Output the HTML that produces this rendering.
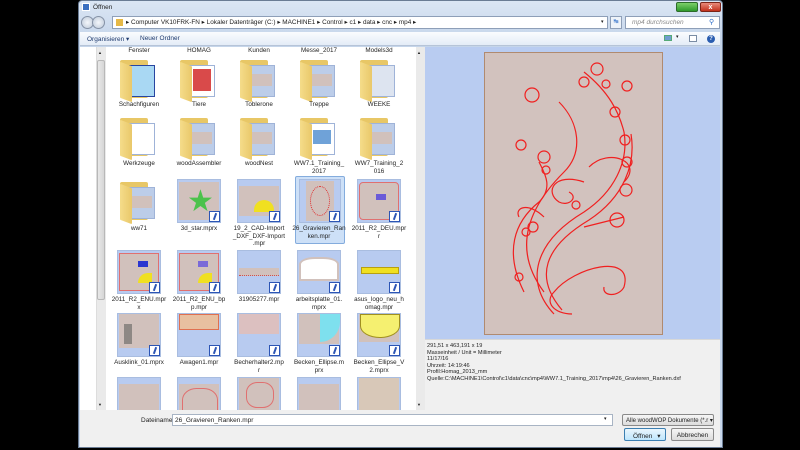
<!DOCTYPE html>
<html><head><meta charset="utf-8"><style>
*{margin:0;padding:0;box-sizing:border-box}
body{width:800px;height:450px;background:#000;position:relative;overflow:hidden;font-family:"Liberation Sans",sans-serif;font-size:6.5px;color:#1e1e1e}
.a{position:absolute}
.win{left:78px;top:0;width:645px;height:448px;background:linear-gradient(#dbe6f4,#c5d5ea 40px,#c9d8ec);border:1px solid #6a7c94;border-radius:4px 4px 0 0}
.lbl{position:absolute;width:60px;text-align:center;line-height:7.5px;font-size:6.3px}
.th{position:absolute;width:44px;height:44px;background:#b8cbf0;border:1px solid #a9bde0}
.th .w{position:absolute;left:1px;right:1px;top:6px;bottom:6px;background:#d1c1bc}
.bad{position:absolute;right:0;bottom:0;width:11px;height:11px;background:#fff;border:1px solid #2c55b5}
.bad:after{content:"";position:absolute;left:4px;top:1px;width:2px;height:7px;background:#2c55b5;transform:rotate(20deg)}
.fd{position:absolute;width:44px;height:44px}
.fd .b{position:absolute;left:3px;top:4px;width:28px;height:38px;background:#e8c766;border-radius:2px}
.fd .p{position:absolute;left:12px;top:9px;width:26px;height:32px;background:#bccde9;border:1px solid #9fb3d8}
.fd .f{position:absolute;left:3px;top:8px;width:12px;height:36px;background:linear-gradient(90deg,#f5dc8a,#e9c86a);transform:skewY(20deg);border-radius:1px}
</style></head><body>
<div class="a win"></div>
<div class="a" style="left:82px;top:3px;width:8px;height:8px;background:#3a6fc0;border:1px solid #fff"></div>
<div class="a" style="left:93px;top:4px;font-size:6.5px">Öffnen</div>
<div class="a" style="left:676px;top:2px;width:22px;height:10px;background:linear-gradient(#7ccf6a,#2f9a2c);border:1px solid #2d6b2a;border-radius:2px"></div>
<div class="a" style="left:700px;top:2px;width:21px;height:10px;background:linear-gradient(#e88a7a,#c2301c);border:1px solid #7a2418;border-radius:2px;color:#fff;font-size:7px;text-align:center;line-height:9px;font-weight:bold">x</div>
<div class="a" style="left:81px;top:16px;width:13px;height:13px;border-radius:50%;background:radial-gradient(#f4f7fb,#bcc8d8);border:1px solid #8592a6"></div>
<div class="a" style="left:92px;top:16px;width:13px;height:13px;border-radius:50%;background:radial-gradient(#f4f7fb,#bcc8d8);border:1px solid #8592a6"></div>
<div class="a" style="left:112px;top:16px;width:496px;height:13px;background:#fff;border:1px solid #8e9fb8"></div>
<div class="a" style="left:116px;top:19px;width:7px;height:7px;background:#e6b947"></div>
<div class="a" style="left:126px;top:18px;font-size:6.4px;white-space:nowrap">▸ Computer VK10FRK-FN ▸ Lokaler Datenträger (C:) ▸ MACHINE1 ▸ Control ▸ c1 ▸ data ▸ cnc ▸ mp4 ▸</div>
<div class="a" style="left:601px;top:19px;font-size:5px">▾</div>
<div class="a" style="left:610px;top:16px;width:12px;height:13px;background:#eef3f9;border:1px solid #8e9fb8;color:#2b6cc8;font-size:6px;text-align:center;line-height:11px">↹</div>
<div class="a" style="left:625px;top:16px;width:95px;height:13px;background:#fff;border:1px solid #8e9fb8;color:#8a8a8a;font-style:italic;padding:2px 0 0 6px">mp4 durchsuchen</div>
<div class="a" style="left:709px;top:18px;color:#2b6cc8;font-size:7px">⚲</div>
<div class="a" style="left:80px;top:32px;width:640px;height:14px;background:linear-gradient(#fafcfe,#e4ecf7);border-bottom:1px solid #b6c4d8"></div>
<div class="a" style="left:87px;top:35px;color:#1e3a6e">Organisieren ▾</div>
<div class="a" style="left:140px;top:35px;color:#1e3a6e">Neuer Ordner</div>
<div class="a" style="left:664px;top:35px;width:8px;height:6px;background:#6f9dcf;border:1px solid #5a7"></div>
<div class="a" style="left:676px;top:34px;font-size:5px">▾</div>
<div class="a" style="left:689px;top:35px;width:8px;height:7px;background:#fff;border:1px solid #7a8ca4"></div>
<div class="a" style="left:707px;top:35px;width:8px;height:8px;border-radius:50%;background:#2a5db0;color:#fff;font-size:6px;text-align:center;line-height:8px;font-weight:bold">?</div>
<div class="a" style="left:80px;top:47px;width:16px;height:363px;background:#fff"></div>
<div class="a" style="left:96px;top:47px;width:10px;height:363px;background:#eaeaea;border-left:1px solid #ddd"></div>
<div class="a" style="left:97px;top:60px;width:8px;height:240px;background:linear-gradient(90deg,#e8e8e8,#d6d6d6);border:1px solid #b8b8b8;border-radius:2px"></div>
<div class="a" style="left:98px;top:50px;font-size:4px">▲</div>
<div class="a" style="left:98px;top:402px;font-size:4px">▼</div>
<div class="a" style="left:106px;top:47px;width:311px;height:363px;background:#fff"></div>
<div class="a" style="left:416px;top:47px;width:9px;height:363px;background:#eaeaea"></div>
<div class="a" style="left:417px;top:50px;font-size:4px">▲</div>
<div class="a" style="left:417px;top:402px;font-size:4px">▼</div>
<div class="a" style="left:295px;top:176px;width:50px;height:68px;background:#cde0f7;border:1px solid #84acdd;border-radius:2px"></div>

<div class="lbl" style="left:109px;top:47px">Fenster</div>
<div class="lbl" style="left:169px;top:47px">HOMAG</div>
<div class="lbl" style="left:229px;top:47px">Kunden</div>
<div class="lbl" style="left:289px;top:47px">Messe_2017</div>
<div class="lbl" style="left:349px;top:47px">Models3d</div>

<div class="fd" style="left:117px;top:56px"><div class="b"></div><div class="p" style="background:#a9d8f3;border-color:#2845a0"></div><div class="f"></div></div>
<div class="fd" style="left:177px;top:56px"><div class="b"></div><div class="p" style="background:#fff"><div style="margin:3px;height:22px;background:#d94a4a"></div></div><div class="f"></div></div>
<div class="fd" style="left:237px;top:56px"><div class="b"></div><div class="p"><div style="margin:8px 2px;height:12px;background:#d1c1bc"></div></div><div class="f"></div></div>
<div class="fd" style="left:297px;top:56px"><div class="b"></div><div class="p"><div style="margin:8px 2px;height:12px;background:#d1c1bc"></div></div><div class="f"></div></div>
<div class="fd" style="left:357px;top:56px"><div class="b"></div><div class="p" style="background:#dde4f0"></div><div class="f"></div></div>
<div class="lbl" style="left:109px;top:101px">Schachfiguren</div>
<div class="lbl" style="left:169px;top:101px">Tiere</div>
<div class="lbl" style="left:229px;top:101px">Toblerone</div>
<div class="lbl" style="left:289px;top:101px">Treppe</div>
<div class="lbl" style="left:349px;top:101px">WEEKE</div>
<div class="fd" style="left:117px;top:114px"><div class="b"></div><div class="p" style="background:#fff"></div><div class="f"></div></div>
<div class="fd" style="left:177px;top:114px"><div class="b"></div><div class="p"><div style="margin:8px 2px;height:12px;background:#d1c1bc"></div></div><div class="f"></div></div>
<div class="fd" style="left:237px;top:114px"><div class="b"></div><div class="p"><div style="margin:8px 2px;height:12px;background:#d1c1bc"></div></div><div class="f"></div></div>
<div class="fd" style="left:297px;top:114px"><div class="b"></div><div class="p" style="background:#fff"><div style="margin:6px 3px;height:14px;background:#6fa2d8"></div></div><div class="f"></div></div>
<div class="fd" style="left:357px;top:114px"><div class="b"></div><div class="p"><div style="margin:8px 2px;height:12px;background:#d1c1bc"></div></div><div class="f"></div></div>
<div class="lbl" style="left:109px;top:160px">Werkzeuge</div>
<div class="lbl" style="left:169px;top:160px">woodAssembler</div>
<div class="lbl" style="left:229px;top:160px">woodNest</div>
<div class="lbl" style="left:289px;top:160px">WW7.1_Training_<br>2017</div>
<div class="lbl" style="left:349px;top:160px">WW7_Training_2<br>016</div>
<div class="fd" style="left:117px;top:178px"><div class="b"></div><div class="p"><div style="margin:8px 2px;height:12px;background:#d1c1bc"></div></div><div class="f"></div></div>
<div class="th" style="left:177px;top:179px"><div class="w" style="top:2px;bottom:2px"></div><div class="a" style="left:9px;top:7px;font-size:30px;color:#4cc24c;line-height:30px">★</div><div class="bad"></div></div>
<div class="th" style="left:237px;top:179px"><div class="w"></div><div class="a" style="left:16px;top:20px;width:20px;height:12px;background:#f0e020;border-radius:10px 10px 0 0"></div><div class="bad"></div></div>
<div class="th" style="left:299px;top:179px;width:42px"><div class="w" style="left:6px;right:6px;top:1px;bottom:1px"></div><div class="a" style="left:10px;top:6px;width:20px;height:30px;border:1px dotted #e03030;border-radius:50%"></div><div class="bad"></div></div>
<div class="th" style="left:357px;top:179px"><div class="w" style="top:2px;bottom:2px;border:1px solid #e07070;border-radius:4px"></div><div class="a" style="left:18px;top:14px;width:10px;height:6px;background:#6a5ad8"></div><div class="bad"></div></div>
<div class="lbl" style="left:109px;top:225px">ww71</div>
<div class="lbl" style="left:169px;top:225px">3d_star.mprx</div>
<div class="lbl" style="left:229px;top:225px">19_2_CAD-Import<br>_DXF_DXF-Import<br>.mpr</div>
<div class="lbl" style="left:289px;top:225px">26_Gravieren_Ran<br>ken.mpr</div>
<div class="lbl" style="left:349px;top:225px">2011_R2_DEU.mpr<br>r</div>
<div class="th" style="left:117px;top:250px"><div class="w" style="top:2px;bottom:2px;border:1px solid #e07070"></div><div class="a" style="left:20px;top:10px;width:10px;height:6px;background:#2a35d0"></div><div class="a" style="left:20px;top:22px;width:14px;height:10px;background:#f0e020;border-radius:10px 0 0 0"></div><div class="bad"></div></div>
<div class="th" style="left:177px;top:250px"><div class="w" style="top:2px;bottom:2px;border:1px solid #e07070"></div><div class="a" style="left:20px;top:10px;width:10px;height:6px;background:#7a6ad8"></div><div class="a" style="left:20px;top:22px;width:14px;height:10px;background:#f0e020;border-radius:10px 0 0 0"></div><div class="bad"></div></div>
<div class="th" style="left:237px;top:250px"><div class="w" style="top:17px;bottom:17px;border-bottom:1px dotted #d05050"></div><div class="bad"></div></div>
<div class="th" style="left:297px;top:250px"><div class="w" style="top:6px;bottom:12px;background:#fff;border:2px solid #d1c1bc;border-radius:40% 40% 0 0/30% 30% 0 0"></div><div class="bad"></div></div>
<div class="th" style="left:357px;top:250px"><div class="a" style="left:3px;top:16px;width:38px;height:7px;background:#f0e020;border:1px solid #b8a010"></div><div class="bad"></div></div>
<div class="lbl" style="left:109px;top:296px">2011_R2_ENU.mpr<br>x</div>
<div class="lbl" style="left:169px;top:296px">2011_R2_ENU_bp<br>p.mpr</div>
<div class="lbl" style="left:229px;top:296px">31905277.mpr</div>
<div class="lbl" style="left:289px;top:296px">arbeitsplatte_01.<br>mprx</div>
<div class="lbl" style="left:349px;top:296px">asus_logo_neu_h<br>omag.mpr</div>
<div class="th" style="left:117px;top:313px"><div class="w" style="top:0;bottom:8px"></div><div class="a" style="left:6px;top:10px;width:8px;height:20px;background:#8e8884"></div><div class="bad"></div></div>
<div class="th" style="left:177px;top:313px"><div class="w" style="top:0;bottom:26px;background:#e8c0a0;border:1px solid #e07050"></div><div class="bad"></div></div>
<div class="th" style="left:237px;top:313px"><div class="w" style="top:0;bottom:22px;background:#dcc0c0"></div><div class="bad"></div></div>
<div class="th" style="left:297px;top:313px"><div class="w" style="top:0;bottom:12px"></div><div class="a" style="left:22px;top:0;width:20px;height:28px;background:#7ee0ee;border-radius:0 0 20px 0"></div><div class="bad"></div></div>
<div class="th" style="left:357px;top:313px"><div class="w" style="top:0;bottom:14px"></div><div class="a" style="left:2px;top:0;width:40px;height:24px;background:#f5f070;border:1px solid #a09020;border-radius:0 0 50% 50%"></div><div class="bad"></div></div>
<div class="lbl" style="left:109px;top:359px">Ausklink_01.mprx</div>
<div class="lbl" style="left:169px;top:359px">Awagen1.mpr</div>
<div class="lbl" style="left:229px;top:359px">Becherhalter2.mp<br>r</div>
<div class="lbl" style="left:289px;top:359px">Becken_Ellipse.m<br>prx</div>
<div class="lbl" style="left:349px;top:359px">Becken_Ellipse_V<br>2.mprx</div>
<div class="th" style="left:117px;top:377px;height:33px;border-bottom:0"><div class="w" style="bottom:0"></div></div>
<div class="th" style="left:177px;top:377px;height:33px;border-bottom:0"><div class="w" style="bottom:0"></div><div class="a" style="left:4px;top:10px;width:36px;height:30px;border:1px solid #e07070;border-radius:40% 40% 0 0"></div></div>
<div class="th" style="left:237px;top:377px;height:33px;border-bottom:0"><div class="w" style="top:0;bottom:0;left:1px;right:1px"></div><div class="a" style="left:8px;top:4px;width:28px;height:26px;border:1px solid #e07070;border-radius:40%"></div></div>
<div class="th" style="left:297px;top:377px;height:33px;border-bottom:0"><div class="w" style="bottom:0"></div></div>
<div class="th" style="left:357px;top:377px;height:33px;border-bottom:0"><div class="w" style="bottom:0;top:0;background:#d8c8b8"></div></div>

<div class="a" style="left:425px;top:47px;width:295px;height:292px;background:#b9ccf1"></div>
<div class="a" style="left:484px;top:52px;width:179px;height:283px;background:#d2c2be;border:1px solid #b08a70"></div>
<svg class="a" style="left:484px;top:52px" width="179" height="283" viewBox="0 0 179 283" fill="none" stroke="#f02020" stroke-width="1.2">
<path d="M70 262 C40 230 50 190 100 160 C130 140 145 110 140 80 C135 60 125 40 100 20"/>
<path d="M78 258 C50 225 60 195 105 168 C140 145 152 112 147 82"/>
<path d="M60 240 C30 200 40 160 80 120 C100 100 95 70 75 50"/>
<path d="M88 262 C70 262 60 250 70 240 C90 215 150 200 140 235 C135 245 118 245 120 235"/>
<path d="M100 130 C70 120 60 140 75 150 C85 155 95 145 85 140"/>
<path d="M40 240 C20 200 30 170 55 150 C70 135 60 120 55 110"/>
<path d="M60 165 C45 150 30 155 35 165"/>
<path d="M105 115 C125 95 160 110 140 130"/>
<path d="M100 175 L140 165"/>
<circle cx="113" cy="17" r="6"/><circle cx="100" cy="30" r="5"/><circle cx="122" cy="32" r="4"/>
<circle cx="48" cy="43" r="7"/><circle cx="37" cy="93" r="5"/><circle cx="60" cy="105" r="6"/>
<circle cx="143" cy="34" r="5"/><circle cx="131" cy="60" r="5"/><circle cx="142" cy="138" r="6"/>
<circle cx="133" cy="168" r="7"/><circle cx="62" cy="118" r="4"/><circle cx="49" cy="175" r="5"/>
<circle cx="92" cy="153" r="4"/><circle cx="141" cy="88" r="5"/><circle cx="143" cy="110" r="5"/>
<circle cx="42" cy="180" r="4"/><circle cx="35" cy="225" r="4"/>
</svg>
<div class="a" style="left:425px;top:339px;width:295px;height:71px;background:#f0f0f0;border-top:1px solid #d8d8d8"></div>
<div class="a" style="left:427px;top:343px;font-size:5.6px;line-height:6.6px;white-space:nowrap">291,51 x 463,191 x 19<br>Masseinheit / Unit = Millimeter<br>11/17/16<br>Uhrzeit: 14:19:46<br>Profil:Homag_2013_mm<br>Quelle:C:\MACHINE1\Control\c1\data\cnc\mp4\WW7.1_Training_2017\mp4\26_Gravieren_Ranken.dxf</div>
<div class="a" style="left:80px;top:410px;width:640px;height:37px;background:#f0f0f0"></div>
<div class="a" style="left:141px;top:417px">Dateiname:</div>
<div class="a" style="left:172px;top:414px;width:441px;height:12px;background:#fff;border:1px solid #a8b4c4;padding:2px 0 0 2px">26_Gravieren_Ranken.mpr</div>
<div class="a" style="left:604px;top:416px;font-size:5px">▾</div>
<div class="a" style="left:622px;top:414px;width:92px;height:12px;background:linear-gradient(#f6f6f6,#dcdcdc);border:1px solid #8a8a8a;border-radius:2px;padding:2px 0 0 3px;font-size:6px;white-space:nowrap">Alle woodWOP Dokumente (*.r ▾</div>
<div class="a" style="left:624px;top:428px;width:42px;height:13px;background:linear-gradient(#eaf6fd,#bee6fd);border:1px solid #3c7fb1;border-radius:2px;padding:3px 0 0 8px">Öffnen <span style="margin-left:3px">▾</span></div>
<div class="a" style="left:671px;top:428px;width:43px;height:13px;background:linear-gradient(#f6f6f6,#dcdcdc);border:1px solid #8a8a8a;border-radius:2px;text-align:center;padding-top:3px">Abbrechen</div>
</body></html>
